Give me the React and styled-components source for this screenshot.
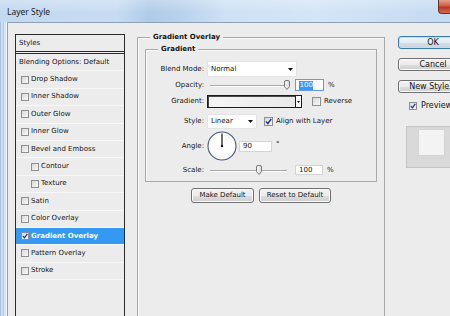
import React from "react";
import styled, { createGlobalStyle } from "styled-components";

const GlobalStyle = createGlobalStyle`
  html, body {
    margin: 0;
    padding: 0;
  }
  body {
    width: 450px;
    height: 316px;
    overflow: hidden;
    background: #ececec;
  }
`;

const styleItems = [
  { label: "Drop Shadow" },
  { label: "Inner Shadow" },
  { label: "Outer Glow" },
  { label: "Inner Glow" },
  { label: "Bevel and Emboss" },
  { label: "Contour", sub: true },
  { label: "Texture", sub: true },
  { label: "Satin" },
  { label: "Color Overlay" },
  { label: "Gradient Overlay", checked: true, selected: true },
  { label: "Pattern Overlay" },
  { label: "Stroke" },
];

const CheckBox = ({ checked, size = 8 }) => (
  <Box $size={size}>
    {checked && (
      <svg width={size - 2} height={size - 2} viewBox="0 0 7 7">
        <path
          d="M1 3.6 L2.9 5.6 L6.2 1"
          fill="none"
          stroke="#22338c"
          strokeWidth="1.5"
        />
      </svg>
    )}
  </Box>
);

const Arrow = () => (
  <svg width="5" height="3" viewBox="0 0 5 3">
    <path d="M0 0 H5 L2.5 3 Z" fill="#111" />
  </svg>
);

const SliderControl = ({ width, pos }) => (
  <Slider $w={width}>
    <Thumb
      width="6"
      height="10"
      viewBox="0 0 6 10"
      style={{ left: `${(width - 6) * pos}px` }}
    >
      <defs>
        <linearGradient id="thumbFill" x1="0" y1="0" x2="1" y2="0">
          <stop offset="0" stopColor="#fbfbfb" />
          <stop offset="1" stopColor="#d9d9d9" />
        </linearGradient>
      </defs>
      <path
        d="M0.5 2 Q0.5 0.5 2 0.5 H4 Q5.5 0.5 5.5 2 V6.6 L3 9.4 L0.5 6.6 Z"
        fill="url(#thumbFill)"
        stroke="#767676"
        strokeWidth="1"
      />
    </Thumb>
  </Slider>
);

const AngleDial = () => (
  <Dial width="30" height="30" viewBox="0 0 30 30">
    <circle cx="15" cy="15" r="14" fill="#fff" stroke="#45557f" strokeWidth="1.1" />
    <line x1="15" y1="15" x2="15" y2="2.5" stroke="#111" strokeWidth="1.2" />
    <circle cx="15" cy="15" r="1.2" fill="#111" />
  </Dial>
);

const App = () => {
  return (
    <>
      <GlobalStyle />
      <Window>
        <TitleBar>
          <Title>Layer Style</Title>
          <CloseButton />
        </TitleBar>
        <Frame>
          <FrameEdge />
          <Client>
            <StyleList>
              <ListHeader>Styles</ListHeader>
              <ListRow $pad={3}>Blending Options: Default</ListRow>
              {styleItems.map((item) => (
                <ListRow
                  key={item.label}
                  $pad={item.sub ? 15 : 5}
                  $selected={item.selected}
                >
                  <CheckBox checked={item.checked} />
                  <span>{item.label}</span>
                </ListRow>
              ))}
            </StyleList>

            <MainPanel>
              <Group $outer>
                <Legend $inset={5}>Gradient Overlay</Legend>
                <Group>
                  <Legend $inset={12}>Gradient</Legend>

                  <Row $h={16} $mt={0}>
                    <Label>Blend Mode:</Label>
                    <Select $w={90} $h={16}>
                      <span>Normal</span>
                      <Arrow />
                    </Select>
                  </Row>

                  <Row $h={12} $mt={2}>
                    <Label>Opacity:</Label>
                    <SliderControl width={80} pos={1} />
                    <NumBox $w={29} $h={12} $ml={5} $focused>
                      <Selection>100</Selection>
                    </NumBox>
                    <Unit $ml={4}>%</Unit>
                  </Row>

                  <Row $h={13} $mt={4}>
                    <Label>Gradient:</Label>
                    <GradientPicker>
                      <GradientSwatch />
                      <GradientButton>
                        <svg width="3" height="2" viewBox="0 0 3 2">
                          <path d="M0 0 H3 L1.5 2 Z" fill="#111" />
                        </svg>
                      </GradientButton>
                    </GradientPicker>
                    <CheckLabel $ml={10}>
                      <CheckBox size={9} />
                      <span>Reverse</span>
                    </CheckLabel>
                  </Row>

                  <Row $h={15} $mt={6}>
                    <Label>Style:</Label>
                    <Select $w={50} $h={15}>
                      <span>Linear</span>
                      <Arrow />
                    </Select>
                    <CheckLabel $ml={7}>
                      <CheckBox size={9} checked />
                      <span>Align with Layer</span>
                    </CheckLabel>
                  </Row>

                  <Row $h={30} $mt={2}>
                    <Label>Angle:</Label>
                    <AngleDial />
                    <NumBox $w={33} $h={11} $ml={2}>
                      90
                    </NumBox>
                    <Degree>°</Degree>
                  </Row>

                  <Row $h={10} $mt={4}>
                    <Label>Scale:</Label>
                    <SliderControl width={77} pos={0.65} />
                    <NumBox $w={28} $h={10} $ml={8}>
                      100
                    </NumBox>
                    <Unit $ml={4}>%</Unit>
                  </Row>
                </Group>

                <ButtonRow>
                  <PushButton $w={63} $h={15}>
                    Make Default
                  </PushButton>
                  <PushButton $w={72} $h={15}>
                    Reset to Default
                  </PushButton>
                </ButtonRow>
              </Group>
            </MainPanel>

            <SideColumn>
              <SideButton $default>OK</SideButton>
              <SideButton>Cancel</SideButton>
              <SideButton>New Style...</SideButton>
              <PreviewToggle>
                <CheckBox checked />
                <span>Preview</span>
              </PreviewToggle>
              <PreviewBox>
                <PreviewSwatch />
              </PreviewBox>
            </SideColumn>
          </Client>
        </Frame>
      </Window>
    </>
  );
};

const Window = styled.div`
  width: 450px;
  height: 316px;
  overflow: hidden;
  display: flex;
  flex-direction: column;
  font-family: "DejaVu Sans", "Liberation Sans", sans-serif;
  font-size: 7px;
  line-height: 9px;
  color: #141414;
`;

const TitleBar = styled.div`
  height: 22px;
  flex: none;
  display: flex;
  align-items: flex-start;
  background: linear-gradient(
      180deg,
      rgba(255, 255, 255, 0.25),
      rgba(255, 255, 255, 0) 60%
    ),
    linear-gradient(
      90deg,
      #c3d9f0 0%,
      #c7dcf2 26%,
      #afcbe8 33%,
      #b8d1ec 40%,
      #cde1f5 50%,
      #d3e5f7 70%,
      #c4daf1 100%
    );
`;

const Title = styled.div`
  font-family: "Noto Sans", "DejaVu Sans", sans-serif;
  font-size: 8.5px;
  line-height: 22px;
  padding: 1px 0 0 7px;
  color: #1a1a1a;
`;

const CloseButton = styled.div`
  margin-left: auto;
  width: 12px;
  height: 14px;
  box-sizing: border-box;
  border: 1px solid #7b2b22;
  border-top: none;
  border-right: none;
  border-radius: 0 0 0 4px;
  background: linear-gradient(180deg, #e3a08f, #cf5a44 45%, #bd3420 55%, #d46a4f);
`;

const Frame = styled.div`
  flex: 1;
  display: flex;
  min-height: 0;
`;

const FrameEdge = styled.div`
  width: 7px;
  flex: none;
  background: linear-gradient(
    90deg,
    #a6c1de 0 1px,
    #cadff3 1px 3px,
    #b2cbe6 3px 4px,
    #d4e5f6 4px 6px,
    #eef4fa 6px 7px
  );
`;

const Client = styled.div`
  flex: 1;
  display: flex;
  align-items: flex-start;
  padding: 10px 0 0 7px;
  border-top: 1px solid #8f9fb4;
  border-left: 1px solid #8f9fb4;
  background: #ececec;
  overflow: hidden;
`;

const StyleList = styled.div`
  width: 110px;
  flex: none;
  align-self: stretch;
  box-sizing: border-box;
  margin-top: 1px;
  border: 1px solid #2c2c2c;
  border-bottom: none;
`;

const ListHeader = styled.div`
  height: 16px;
  display: flex;
  align-items: center;
  padding-left: 3px;
  border-bottom: 3px double #2c2c2c;
`;

const ListRow = styled.div`
  height: 17.4px;
  box-sizing: border-box;
  display: flex;
  align-items: center;
  gap: 2px;
  padding-left: ${(p) => p.$pad}px;
  border-bottom: 1px solid #f8f8f8;
  background: ${(p) => (p.$selected ? "#3399f3" : "transparent")};
  color: ${(p) => (p.$selected ? "#fff" : "#141414")};
  font-weight: ${(p) => (p.$selected ? "bold" : "normal")};
  white-space: nowrap;
`;

const Box = styled.span`
  width: ${(p) => p.$size}px;
  height: ${(p) => p.$size}px;
  flex: none;
  box-sizing: border-box;
  border: 1px solid #8e8f8f;
  background: linear-gradient(135deg, #d9d9d9, #f9f9f9);
  display: flex;
  align-items: center;
  justify-content: center;
`;

const MainPanel = styled.div`
  margin-left: 12px;
  width: 248px;
  flex: none;
`;

const Group = styled.fieldset`
  margin: 0;
  min-width: 0;
  box-sizing: border-box;
  border: 1px solid #a8a8a8;
  box-shadow: inset 1px 1px 0 #fafafa;
  padding: ${(p) => (p.$outer ? "3px 7px 0" : "7px 0 6px")};
  height: ${(p) => (p.$outer ? "300px" : "auto")};
`;

const Legend = styled.legend`
  margin-left: ${(p) => p.$inset}px;
  padding: 0 3px;
  font-weight: bold;
  line-height: 9px;
  background: #ececec;
`;

const Row = styled.div`
  display: flex;
  align-items: center;
  height: ${(p) => p.$h}px;
  margin-top: ${(p) => p.$mt}px;
  white-space: nowrap;
`;

const Label = styled.span`
  width: 58px;
  flex: none;
  margin-right: 3px;
  text-align: right;
`;

const Select = styled.div`
  width: ${(p) => p.$w}px;
  height: ${(p) => p.$h}px;
  flex: none;
  box-sizing: border-box;
  display: flex;
  align-items: center;
  justify-content: space-between;
  padding: 0 3px 0 3px;
  background: #fff;
  border: 1px solid #e4e4e4;
`;

const Slider = styled.div`
  position: relative;
  width: ${(p) => p.$w}px;
  height: 100%;
  flex: none;
  margin-left: 3px;

  &::before {
    content: "";
    position: absolute;
    left: 0;
    right: 0;
    top: 50%;
    height: 1px;
    background: #a9a9a9;
    border-bottom: 1px solid #fff;
  }
`;

const Thumb = styled.svg`
  position: absolute;
  top: 50%;
  margin-top: -5px;
`;

const NumBox = styled.div`
  width: ${(p) => p.$w}px;
  height: ${(p) => p.$h}px;
  margin-left: ${(p) => p.$ml}px;
  flex: none;
  box-sizing: border-box;
  display: flex;
  align-items: center;
  padding-left: 3px;
  background: #fff;
  border: 1px solid ${(p) => (p.$focused ? "#6b9ad6" : "#d4d4d4")};
`;

const Selection = styled.span`
  background: #3399ff;
  color: #fff;
  padding: 0 0.5px;
`;

const Unit = styled.span`
  margin-left: ${(p) => p.$ml}px;
`;

const Degree = styled.span`
  margin-left: 4px;
  align-self: flex-start;
  margin-top: 9px;
`;

const GradientPicker = styled.div`
  width: 95px;
  height: 13px;
  flex: none;
  box-sizing: border-box;
  display: flex;
  border: 1px solid #1d1d1d;
`;

const GradientSwatch = styled.div`
  flex: 1;
  background: linear-gradient(90deg, #f5f5f5, #e9e9e9);
  box-shadow: inset 1px 1px 0 #4a4a4a;
`;

const GradientButton = styled.div`
  width: 5px;
  display: flex;
  align-items: center;
  justify-content: center;
  border-left: 1px solid #1d1d1d;
  background: #fff;
`;

const CheckLabel = styled.div`
  display: flex;
  align-items: center;
  gap: 3px;
  margin-left: ${(p) => p.$ml}px;
`;

const Dial = styled.svg`
  flex: none;
  display: block;
`;

const ButtonRow = styled.div`
  display: flex;
  justify-content: center;
  gap: 5px;
  margin-top: 6px;
`;

const PushButton = styled.div`
  width: ${(p) => p.$w}px;
  height: ${(p) => p.$h}px;
  box-sizing: border-box;
  display: flex;
  align-items: center;
  justify-content: center;
  border: 1px solid #707070;
  border-radius: 3px;
  box-shadow: inset 0 0 0 1px #fbfbfb;
  background: linear-gradient(180deg, #f2f2f2 0%, #ebebeb 50%, #dddddd 51%, #cfcfcf 100%);
  white-space: nowrap;
`;

const SideColumn = styled.div`
  margin-left: 13px;
  margin-top: 3px;
  width: 70px;
  flex: none;
  display: flex;
  flex-direction: column;
  font-size: 8px;
  line-height: 10px;
`;

const SideButton = styled.div`
  height: 13px;
  box-sizing: border-box;
  margin-bottom: 9px;
  display: flex;
  align-items: center;
  justify-content: center;
  white-space: nowrap;
  border: 1px solid ${(p) => (p.$default ? "#3a7cae" : "#707070")};
  border-radius: 3px;
  box-shadow: inset 0 0 0 1px ${(p) => (p.$default ? "#b8e0f6" : "#fbfbfb")};
  background: ${(p) =>
    p.$default
      ? "linear-gradient(180deg, #eef4f8 0%, #e3ebf1 50%, #d4dee6 51%, #c9d4dd 100%)"
      : "linear-gradient(180deg, #f2f2f2 0%, #ebebeb 50%, #dddddd 51%, #cfcfcf 100%)"};
`;

const PreviewToggle = styled.div`
  display: flex;
  align-items: center;
  gap: 4px;
  height: 10px;
  margin-top: -1px;
  padding-left: 11px;
`;

const PreviewBox = styled.div`
  margin: 15px 0 0 8px;
  height: 42px;
  box-sizing: border-box;
  border: 1px solid #c6c6c6;
  background: #d9d9d9;
  padding: 3px 0 0 12px;
`;

const PreviewSwatch = styled.div`
  width: 25px;
  height: 25px;
  background: #f3f3f3;
  box-shadow: 0 0 1px #c0c0c0;
`;

export default App;
